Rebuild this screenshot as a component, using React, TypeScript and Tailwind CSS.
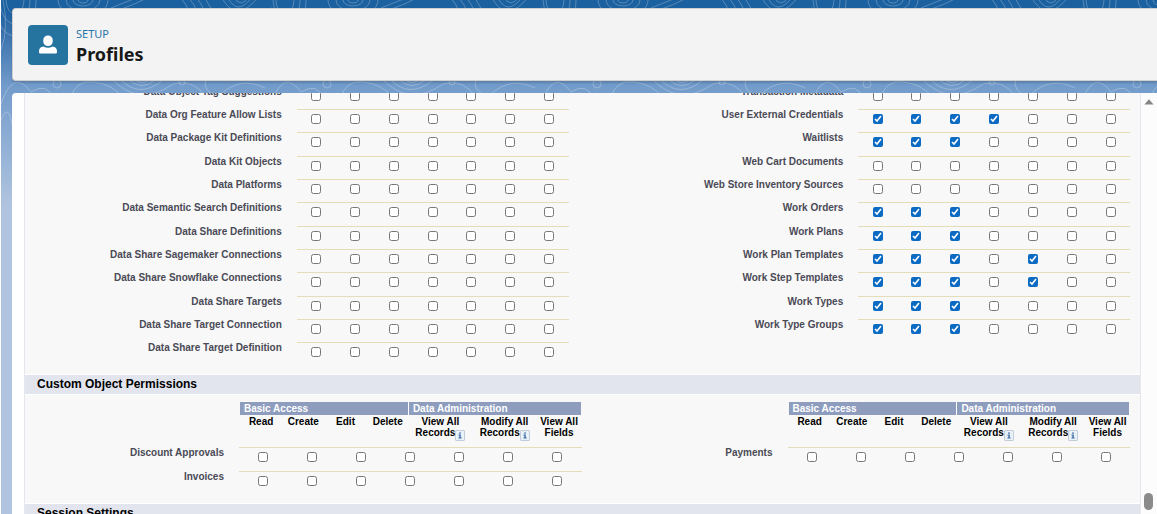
const OBJECTS_LEFT: [string, number][] = [
  ["Data Object Tag Suggestions", 0],
  ["Data Org Feature Allow Lists", 0],
  ["Data Package Kit Definitions", 0],
  ["Data Kit Objects", 0],
  ["Data Platforms", 0],
  ["Data Semantic Search Definitions", 0],
  ["Data Share Definitions", 0],
  ["Data Share Sagemaker Connections", 0],
  ["Data Share Snowflake Connections", 0],
  ["Data Share Targets", 0],
  ["Data Share Target Connection", 0],
  ["Data Share Target Definition", 0],
];

// Second value is a bit mask of granted permissions, lowest bit = Read.
const OBJECTS_RIGHT: [string, number][] = [
  ["Transaction Metadata", 0],
  ["User External Credentials", 15],
  ["Waitlists", 7],
  ["Web Cart Documents", 0],
  ["Web Store Inventory Sources", 0],
  ["Work Orders", 7],
  ["Work Plans", 7],
  ["Work Plan Templates", 23],
  ["Work Step Templates", 23],
  ["Work Types", 7],
  ["Work Type Groups", 7],
];

const PERMISSIONS = [
  "Read",
  "Create",
  "Edit",
  "Delete",
  "View All Records",
  "Modify All Records",
  "View All Fields",
];

function PermissionCells({ name, mask }: { name: string; mask: number }) {
  return (
    <>
      {PERMISSIONS.map((permission, i) => (
        <td key={permission} className="border-t border-[#e3deb8] p-0 pt-1 text-center align-top">
          <input
            type="checkbox"
            aria-label={`${name}: ${permission}`}
            defaultChecked={(mask & (1 << i)) !== 0}
            className="mx-auto block size-[10px] accent-[#0b6bc2]"
          />
        </td>
      ))}
    </>
  );
}

function Label({ children }: { children: string }) {
  return (
    <th scope="row" className="p-0 pr-[15px] text-right align-top text-[10px] leading-3 font-bold whitespace-nowrap text-[#4a4a56]">
      {children}
    </th>
  );
}

function ObjectTable({ rows }: { rows: [string, number][] }) {
  return (
    <table className="w-full table-fixed border-separate border-spacing-0">
      <colgroup>
        <col className="w-1/2" />
        {PERMISSIONS.map((p) => (
          <col key={p} />
        ))}
      </colgroup>
      <tbody>
        {rows.map(([name, mask]) => (
          <tr key={name} className="h-[23px] nth-[3n]:h-6">
            <Label>{name}</Label>
            <PermissionCells name={name} mask={mask} />
          </tr>
        ))}
      </tbody>
    </table>
  );
}

function Info() {
  return (
    <button
      type="button"
      aria-label="Info"
      className="inline-flex h-[11px] w-[10px] items-center justify-center rounded-[1px] border border-[#c3ccd8] bg-[#e9f1f9] align-[-4px]"
    >
      <svg viewBox="0 0 8 9" className="h-[9px] w-2" fill="#3f6fa8">
        <rect x="3.2" y="1.4" width="1.6" height="1.4" />
        <path d="M2.4 3.6h2.4v3h.9v1H2.4v-1h.9v-2h-.9z" />
      </svg>
    </button>
  );
}

const COLUMN = "p-0 pt-px align-top text-[10px] leading-[11px] font-bold text-black";

function PermissionHeader() {
  return (
    <table className="h-[45px] w-full table-fixed border-separate border-spacing-0">
      <colgroup>
        <col className="w-[12.4%]" />
        <col className="w-[12.4%]" />
        <col className="w-[12.4%]" />
        <col className="w-[12.4%]" />
        <col className="w-[18.5%]" />
        <col className="w-[19.3%]" />
        <col />
      </colgroup>
      <thead>
        <tr className="h-[13px] text-left text-[10px] leading-[13px] text-white">
          <th colSpan={4} className="border-r border-white bg-[#8e9dbe] p-0 pl-1">
            Basic Access
          </th>
          <th colSpan={3} className="bg-[#8e9dbe] p-0 pl-1">
            Data Administration
          </th>
        </tr>
        <tr className="h-8">
          <th className={COLUMN}>Read</th>
          <th className={COLUMN}>Create</th>
          <th className={COLUMN}>Edit</th>
          <th className={COLUMN}>Delete</th>
          <th className={COLUMN}>
            View All
            <br />
            <span className="whitespace-nowrap">Records<Info /></span>
          </th>
          <th className={COLUMN}>
            Modify All
            <br />
            <span className="whitespace-nowrap">Records<Info /></span>
          </th>
          <th className={COLUMN}>
            View All
            <br />
            Fields
          </th>
        </tr>
      </thead>
    </table>
  );
}

function CustomTable({ names }: { names: string[] }) {
  return (
    <table className="w-full table-fixed border-separate border-spacing-0">
      <colgroup>
        <col className="w-[200px]" />
        {PERMISSIONS.map((p) => (
          <col key={p} />
        ))}
      </colgroup>
      <tbody>
        <tr>
          <td className="p-0" />
          <td colSpan={7} className="p-0 px-px align-top">
            <PermissionHeader />
          </td>
        </tr>
        {names.map((name) => (
          <tr key={name} className="h-6">
            <Label>{name}</Label>
            <PermissionCells name={name} mask={0} />
          </tr>
        ))}
      </tbody>
    </table>
  );
}

function SectionTitle({ children }: { children: string }) {
  return (
    <h2 className="border-y border-white bg-[#e2e4ee] pl-3 text-[12px] leading-[19px] font-bold text-black">
      {children}
    </h2>
  );
}

function Contours() {
  return (
    <svg className="absolute inset-0 size-full" aria-hidden="true">
      <defs>
        <pattern id="contours" width="270" height="130" patternUnits="userSpaceOnUse">
          <g fill="none" stroke="#fff" strokeOpacity="0.25">
            <ellipse cx="82" cy="0" rx="5" ry="3" />
            <ellipse cx="82" cy="0" rx="10" ry="6" />
            <ellipse cx="82" cy="0" rx="17" ry="11" />
            <ellipse cx="82" cy="0" rx="25" ry="17" />
            <ellipse cx="14" cy="0" rx="9" ry="14" />
            <ellipse cx="14" cy="0" rx="15" ry="24" />
            <ellipse cx="14" cy="0" rx="21" ry="36" />
            <path d="M0 50Q8 28 2 0M110 8Q125 2 140-4M118 10Q135 4 150-4M180-2Q186 5 188 12M188-2Q194 5 196 12M196-2Q201 5 204 12M204-2Q208 5 212 12M226-4Q236 18 252-4M232-4Q240 10 248-4M220-4Q235 26 258-4" />
            <path d="M0 104Q12 68 30 92Q46 82 52 98M70 98Q74 80 92 82Q112 84 122 98M118 78Q138 100 162 80M126 78Q140 92 154 80M110 78Q138 108 172 84Q192 78 206 98M132 78Q140 86 148 80M205 78Q200 92 220 98M220 94Q240 76 264 88M0 120Q8 100 12 130" />
            <circle cx="56" cy="84" r="4" />
            <circle cx="181" cy="82" r="3" />
          </g>
        </pattern>
      </defs>
      <rect width="100%" height="100%" fill="url(#contours)" />
    </svg>
  );
}

export default function App() {
  return (
    <div className="relative isolate flex h-screen flex-col gap-3 overflow-hidden border-l border-white bg-linear-to-b from-[#1b609f] from-2% via-[#739ccb] via-17% to-[#b0c4df] to-40% pt-2 pl-[11px] font-['Liberation_Sans',Arial,sans-serif]">
      <div className="absolute inset-x-0 top-0 -z-10 h-[130px] overflow-hidden">
        <Contours />
      </div>
      <header className="flex h-[73px] shrink-0 items-center gap-2 rounded-l border border-r-0 border-[#d0d0d0] bg-[#f3f3f3] pl-[15px] shadow-[0_2px_2px_rgba(0,0,0,0.15)]">
        <span className="flex size-10 items-center justify-center rounded bg-[#2574a0]">
          <svg viewBox="0 0 20 20" className="size-5" fill="#fff" aria-hidden="true">
            <rect x="5.3" y="0.4" width="9.4" height="10.6" rx="4.6" />
            <path d="M1 16C1 13.200 2.900 11.600 5.500 11.400Q7.500 12.800 10 12.800T14.500 11.400C17.100 11.600 19 13.200 19 16V17.200Q19 18.400 17.800 18.400H2.200Q1 18.400 1 17.200z" />
          </svg>
        </span>
        <div className="pt-0.5 font-['Noto_Sans','Open_Sans',sans-serif]">
          <p className="text-[11px] leading-[18px] text-[#2574a9]">SETUP</p>
          <h1 className="text-[18px] leading-[23px] font-bold text-[#181818]">Profiles</h1>
        </div>
      </header>
      <main className="flex min-h-0 flex-1 overflow-hidden rounded-tl bg-white pl-3">
        <div className="min-w-0 flex-1 overflow-hidden border-x border-[#e6e6ee] bg-[#f8f8f8]">
          <section className="-mt-[7px] grid grid-cols-2 items-start gap-x-[18px] pr-[10px] pb-2">
            <ObjectTable rows={OBJECTS_LEFT} />
            <ObjectTable rows={OBJECTS_RIGHT} />
          </section>
          <SectionTitle>Custom Object Permissions</SectionTitle>
          <section className="grid grid-cols-2 items-start gap-x-[6px] pt-[7px] pr-[10px] pb-2 pl-[14px]">
            <CustomTable names={["Discount Approvals", "Invoices"]} />
            <CustomTable names={["Payments"]} />
          </section>
          <SectionTitle>Session Settings</SectionTitle>
        </div>
        <div className="flex w-4 shrink-0 flex-col items-center justify-between bg-[#fcfcfc] pt-[6px] pr-px pb-1" aria-hidden="true">
          <svg viewBox="0 0 10 6" className="h-[6px] w-[10px]" fill="#858585">
            <path d="M5 0.300L9.600 5.500H.4z" />
          </svg>
          <span className="h-[17px] w-[9px] rounded-full bg-[#8b8b8b]" />
        </div>
      </main>
    </div>
  );
}
